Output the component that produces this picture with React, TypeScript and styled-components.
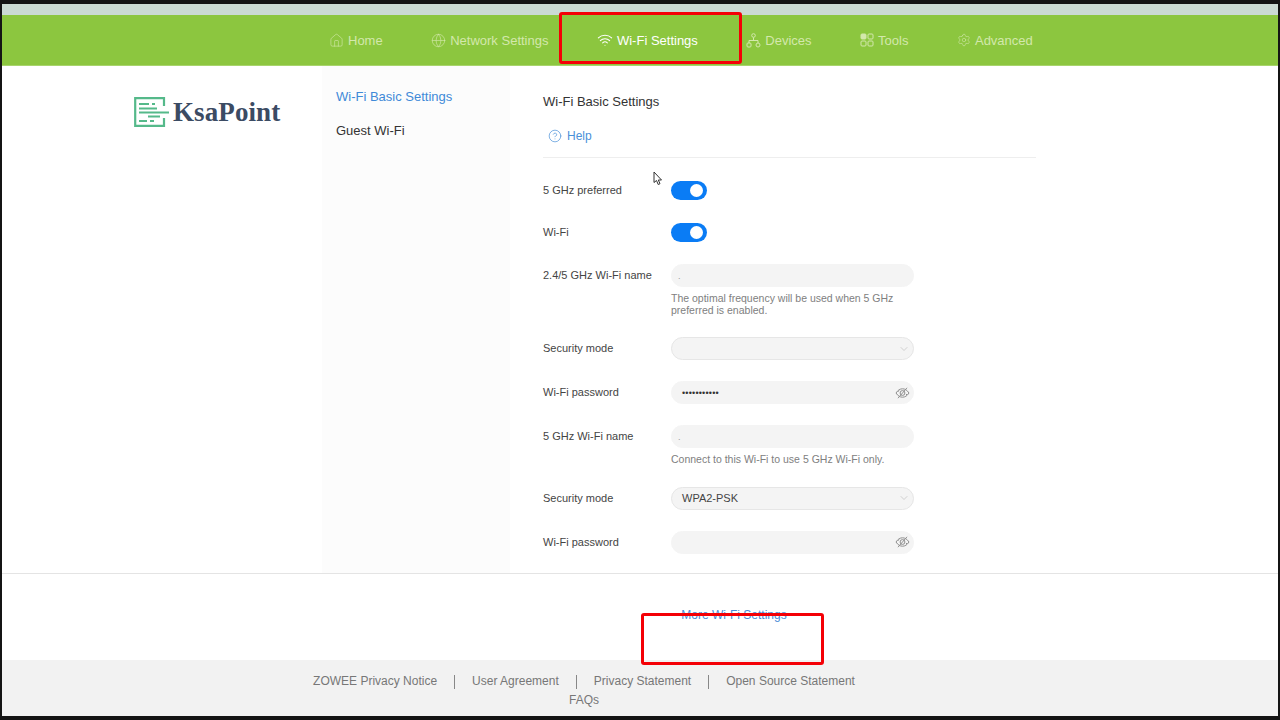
import React from "react";
import styled, { createGlobalStyle } from "styled-components";
import { House, Globe, Wifi, Settings, ChevronDown, CircleHelp } from "lucide-react";

const Global = createGlobalStyle`
  html, body { margin: 0; padding: 0; background: #111; }
  body { font-family: "Liberation Sans", Arial, sans-serif; }
  * { box-sizing: border-box; }
`;

const Frame = styled.div`
  position: relative;
  width: 1280px;
  height: 720px;
  padding: 4px 2px 4px 2px;
  background: #141414;
  overflow: hidden;
  display: flex;
  flex-direction: column;
`;
const TopStrip = styled.div`
  height: 11px;
  flex: none;
  background: #cbdad3;
`;
const Nav = styled.nav`
  height: 51px;
  flex: none;
  background: #8cc63f;
  border-bottom: 1px solid #a8d46c;
  display: flex;
  align-items: center;
  gap: 48.5px;
  padding-left: 327px;
`;
const NavItem = styled.a<{ $active?: boolean }>`
  display: flex;
  align-items: center;
  gap: 4px;
  font-size: 13px;
  color: ${(p) => (p.$active ? "#ffffff" : "#d3e8ac")};
  svg { flex: none; display: block; }
`;
const Main = styled.main`
  height: 508px;
  flex: none;
  background: #fff;
  display: flex;
  border-bottom: 1px solid #e4e4e4;
  overflow: hidden;
`;
const LogoCol = styled.div`
  width: 320px;
  flex: none;
  padding: 31px 0 0 132px;
`;
const Logo = styled.div`
  display: flex;
  align-items: center;
  gap: 4px;
  height: 30px;
`;
const LogoText = styled.span`
  font-family: "Liberation Serif", serif;
  font-weight: 700;
  font-size: 27px;
  letter-spacing: 0.1px;
  color: #3b4b63;
  line-height: 30px;
`;
const Sidebar = styled.aside`
  width: 188px;
  flex: none;
  background: #fcfcfc;
  padding: 23px 0 0 14px;
  display: flex;
  flex-direction: column;
  gap: 19px;
`;
const SideLink = styled.a<{ $active?: boolean }>`
  font-size: 13px;
  line-height: 15px;
  color: ${(p) => (p.$active ? "#3f8ad8" : "#333")};
`;
const Content = styled.section`
  width: 493px;
  margin-left: 33px;
  flex: none;
  padding-top: 28px;
`;
const Title = styled.h1`
  margin: 0;
  font-weight: 400;
  font-size: 13px;
  line-height: 15px;
  color: #333;
`;
const Help = styled.a`
  display: flex;
  align-items: center;
  gap: 5px;
  margin: 19px 0 0 5px;
  height: 16px;
  font-size: 12px;
  color: #4a90d9;
`;
const Rule = styled.hr`
  margin: 13px 0 0;
  border: 0;
  border-top: 1px solid #eeeeee;
`;
const Form = styled.div`
  margin-top: 22px;
  display: flex;
  flex-direction: column;
  gap: 21px;
`;
const Row = styled.div`
  display: grid;
  grid-template-columns: 128px 243px;
  align-items: start;
`;
const Label = styled.div<{ $tall?: boolean }>`
  font-size: 11px;
  color: #444;
  line-height: ${(p) => (p.$tall ? "23px" : "21px")};
`;
const Toggle = styled.div`
  width: 36px;
  height: 19px;
  margin-top: 1px;
  border-radius: 10px;
  background: #0a7cf5;
  position: relative;
  &::after {
    content: "";
    position: absolute;
    right: 4px;
    top: 3px;
    width: 13px;
    height: 13px;
    border-radius: 50%;
    background: #fff;
  }
`;
const Field = styled.div<{ $select?: boolean }>`
  height: 23px;
  border-radius: 12px;
  background: #f4f4f4;
  border: 1px solid ${(p) => (p.$select ? "#e6e6e6" : "#f4f4f4")};
  display: flex;
  align-items: center;
  justify-content: space-between;
  padding: 0 3px 0 10px;
  font-size: 11px;
  color: #444;
  svg { flex: none; display: block; }
`;
const Dots = styled.span`
  font-size: 9px;
  letter-spacing: 0.2px;
  color: #333;
`;
const Mark = styled.span`
  font-size: 9px;
  color: #999;
  margin-left: -4px;
`;
const Hint = styled.div`
  margin-top: 6px;
  font-size: 10.5px;
  line-height: 11.5px;
  color: #808080;
`;
const MoreBar = styled.div`
  height: 86px;
  flex: none;
  background: #fff;
  display: flex;
  align-items: center;
  justify-content: center;
  padding: 0 0 4px 188px;
`;
const MoreLink = styled.a`
  font-size: 12px;
  color: #4a8bd6;
`;
const Footer = styled.footer`
  flex: 1;
  background: #f2f2f2;
  padding: 14px 112px 0 0;
  font-size: 12px;
  color: #777;
  display: flex;
  flex-direction: column;
  align-items: center;
  gap: 4px;
`;
const FooterRow = styled.div`
  display: flex;
  align-items: center;
  line-height: 14px;
`;
const FooterLink = styled.a`
  & + &::before {
    content: "";
    display: inline-block;
    width: 1px;
    height: 14px;
    margin: 0 17px;
    vertical-align: middle;
    background: #888;
  }
`;
const Annotation = styled.div<{ $left: number; $top: number; $w: number; $h: number }>`
  position: absolute;
  left: ${(p) => p.$left}px;
  top: ${(p) => p.$top}px;
  width: ${(p) => p.$w}px;
  height: ${(p) => p.$h}px;
  border: 3px solid #f40006;
  border-radius: 3px;
  pointer-events: none;
`;
const Cursor = styled.svg`
  position: absolute;
  left: 653px;
  top: 171px;
`;

const DevicesIcon = () => (
  <svg width="15" height="15" viewBox="0 0 15 15" fill="none" stroke="currentColor" strokeWidth="1">
    <circle cx="7.5" cy="2.5" r="1.8" />
    <path d="M7.5 4.5V7.5M3 10V7.5H12V10" />
    <rect x="1" y="10" width="4" height="4" rx="1" />
    <rect x="10" y="10" width="4" height="4" rx="2" />
  </svg>
);
const ToolsIcon = () => (
  <svg width="14" height="14" viewBox="0 0 14 14" fill="none" stroke="currentColor" strokeWidth="1">
    <rect x="1" y="1" width="5" height="5" rx="1" fill="currentColor" />
    <rect x="8" y="1" width="5" height="5" rx="1" />
    <rect x="1" y="8" width="5" height="5" rx="1" />
    <rect x="8" y="8" width="5" height="5" rx="1" />
  </svg>
);
const EyeOff = () => (
  <svg width="15" height="12" viewBox="0 0 15 12" fill="none" stroke="#8e8e8e" strokeWidth="1">
    <path d="M1 6C3 3 5 1.8 7.5 1.8S12 3 14 6C12 9 10 10.2 7.5 10.2S3 9 1 6Z" />
    <circle cx="7.5" cy="6" r="2.4" />
    <path d="M12 0.8L3 11.2" />
    <path d="M4 3.5L3 4.8M11 8L12 7" />
  </svg>
);
const LogoMark = () => (
  <svg width="35" height="30" viewBox="0 0 35 30" fill="none" stroke="#55b98a">
    <path d="M30 9V1.2H1.2V28.8H30V21" strokeWidth="2.2" />
    <path d="M5 7H15M18 7H21M5 11.5H23M5 15.5H35M14 19.5H26M5 24H13M16 24H20" strokeWidth="2" />
  </svg>
);

const nav = [
  { label: "Home", icon: <House size={15} strokeWidth={1} /> },
  { label: "Network Settings", icon: <Globe size={15} strokeWidth={1} /> },
  { label: "Wi-Fi Settings", icon: <Wifi size={16} strokeWidth={1.6} />, active: true },
  { label: "Devices", icon: <DevicesIcon /> },
  { label: "Tools", icon: <ToolsIcon /> },
  { label: "Advanced", icon: <Settings size={14} strokeWidth={1} /> },
];

export default function App() {
  return (
    <Frame>
      <Global />
      <TopStrip />
      <Nav>
        {nav.map((n) => (
          <NavItem key={n.label} $active={n.active}>
            {n.icon}
            {n.label}
          </NavItem>
        ))}
      </Nav>
      <Main>
        <LogoCol>
          <Logo>
            <LogoMark />
            <LogoText>KsaPoint</LogoText>
          </Logo>
        </LogoCol>
        <Sidebar>
          <SideLink $active>Wi-Fi Basic Settings</SideLink>
          <SideLink>Guest Wi-Fi</SideLink>
        </Sidebar>
        <Content>
          <Title>Wi-Fi Basic Settings</Title>
          <Help>
            <CircleHelp size={14} strokeWidth={1.2} />
            Help
          </Help>
          <Rule />
          <Form>
            <Row>
              <Label>5 GHz preferred</Label>
              <Toggle />
            </Row>
            <Row>
              <Label>Wi-Fi</Label>
              <Toggle />
            </Row>
            <Row>
              <Label $tall>2.4/5 GHz Wi-Fi name</Label>
              <div>
                <Field><Mark>.</Mark></Field>
                <Hint>The optimal frequency will be used when 5 GHz preferred is enabled.</Hint>
              </div>
            </Row>
            <Row>
              <Label $tall>Security mode</Label>
              <Field $select>
                <span />
                <ChevronDown size={12} strokeWidth={1} color="#aaa" />
              </Field>
            </Row>
            <Row>
              <Label $tall>Wi-Fi password</Label>
              <Field>
                <Dots>•••••••••••</Dots>
                <EyeOff />
              </Field>
            </Row>
            <Row>
              <Label $tall>5 GHz Wi-Fi name</Label>
              <div>
                <Field><Mark>.</Mark></Field>
                <Hint>Connect to this Wi-Fi to use 5 GHz Wi-Fi only.</Hint>
              </div>
            </Row>
            <Row>
              <Label $tall>Security mode</Label>
              <Field $select>
                <span>WPA2-PSK</span>
                <ChevronDown size={12} strokeWidth={1} color="#aaa" />
              </Field>
            </Row>
            <Row>
              <Label $tall>Wi-Fi password</Label>
              <Field>
                <span />
                <EyeOff />
              </Field>
            </Row>
          </Form>
        </Content>
      </Main>
      <MoreBar>
        <MoreLink>More Wi-Fi Settings</MoreLink>
      </MoreBar>
      <Footer>
        <FooterRow>
          <FooterLink>ZOWEE Privacy Notice</FooterLink>
          <FooterLink>User Agreement</FooterLink>
          <FooterLink>Privacy Statement</FooterLink>
          <FooterLink>Open Source Statement</FooterLink>
        </FooterRow>
        <FooterRow>
          <FooterLink>FAQs</FooterLink>
        </FooterRow>
      </Footer>
      <Annotation $left={559} $top={12} $w={183} $h={52} />
      <Annotation $left={641} $top={613} $w={183} $h={52} />
      <Cursor width="10" height="15" viewBox="0 0 10 15" fill="#fff" stroke="#333" strokeWidth="1">
        <path d="M1 1V11.5L3.5 9.5L5.2 13.5L7 12.7L5.3 9H8.5Z" />
      </Cursor>
    </Frame>
  );
}
